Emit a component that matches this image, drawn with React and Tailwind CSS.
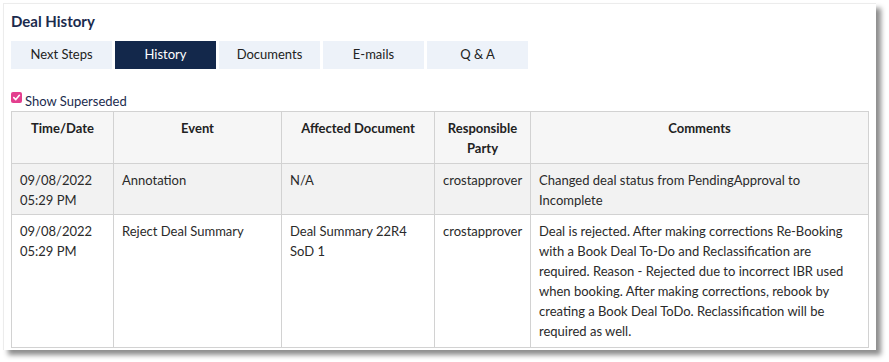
import React from "react";

const tabs = ["Next Steps", "History", "Documents", "E-mails", "Q & A"];

export default function App() {
  return (
    <div className="w-[889px] h-[362px] bg-white pt-[3px] pl-[3px]" style={{ fontFamily: "Lato, 'Noto Sans', sans-serif" }}>
      <div className="w-[873px] h-[347px] bg-white border-t border-l border-[#ececec] shadow-[5px_5px_5px_rgba(0,0,0,0.45)] pl-[7px] pt-[7px]">
        <div className="text-[15px] leading-[20px] font-bold text-[#1b2b4d]">Deal History</div>
        <div className="flex gap-[3px] mt-[10px]">
          {tabs.map((t) => (
            <div
              key={t}
              className={
                t === "History"
                  ? "w-[101px] h-[28px] flex items-center justify-center text-[13px] bg-[#13284b] text-white"
                  : "w-[101px] h-[28px] flex items-center justify-center text-[13px] bg-[#edf2f9] text-[#222]"
              }
            >
              {t}
            </div>
          ))}
        </div>
        <div className="flex items-center mt-[24px] h-[14px]">
          <div className="w-[11px] h-[11px] rounded-[2px] bg-[#e33f8e] flex items-center justify-center mt-[-6px]">
            <svg width="9" height="9" viewBox="0 0 10 10">
              <path d="M2 5.2 L4.2 7.3 L8.2 2.6" stroke="white" strokeWidth="1.8" fill="none" strokeLinecap="round" strokeLinejoin="round" />
            </svg>
          </div>
          <span className="ml-[3px] text-[13px] text-[#1b2b4d] mt-[3px]">Show Superseded</span>
        </div>
        <table className="mt-[4px] w-[857px] border-collapse text-[13px] leading-[20px] text-[#2a2a2a] table-fixed border border-[#c8c8c8]">
          <colgroup>
            <col className="w-[102px]" />
            <col className="w-[168px]" />
            <col className="w-[153px]" />
            <col className="w-[96px]" />
            <col className="w-[338px]" />
          </colgroup>
          <thead>
            <tr className="bg-[#f6f6f6] h-[52px]">
              {["Time/Date", "Event", "Affected Document", "Responsible Party", "Comments"].map((h) => (
                <th key={h} className="border border-[#d2d2d2] align-top font-bold text-center pt-[6px] pb-[4px] px-[8px] text-[#222]">
                  {h}
                </th>
              ))}
            </tr>
          </thead>
          <tbody>
            <tr className="bg-[#f2f2f2] h-[51px]">
              <td className="border border-[#d2d2d2] align-top pt-[6px] px-[8px]">09/08/2022<br />05:29 PM</td>
              <td className="border border-[#d2d2d2] align-top pt-[6px] px-[8px]">Annotation</td>
              <td className="border border-[#d2d2d2] align-top pt-[6px] px-[8px]">N/A</td>
              <td className="border border-[#d2d2d2] align-top pt-[6px] px-[8px]">crostapprover</td>
              <td className="border border-[#d2d2d2] align-top pt-[6px] px-[8px]">Changed deal status from PendingApproval to Incomplete</td>
            </tr>
            <tr className="bg-white h-[133px]">
              <td className="border border-[#d2d2d2] align-top pt-[6px] px-[8px]">09/08/2022<br />05:29 PM</td>
              <td className="border border-[#d2d2d2] align-top pt-[6px] px-[8px]">Reject Deal Summary</td>
              <td className="border border-[#d2d2d2] align-top pt-[6px] px-[8px]">Deal Summary 22R4<br />SoD 1</td>
              <td className="border border-[#d2d2d2] align-top pt-[6px] px-[8px]">crostapprover</td>
              <td className="border border-[#d2d2d2] align-top pt-[6px] px-[8px]">
                Deal is rejected. After making corrections Re-Booking with a Book Deal To-Do and Reclassification are required. Reason - Rejected due to incorrect IBR used when booking. After making corrections, rebook by creating a Book Deal ToDo. Reclassification will be required as well.
              </td>
            </tr>
          </tbody>
        </table>
      </div>
    </div>
  );
}
